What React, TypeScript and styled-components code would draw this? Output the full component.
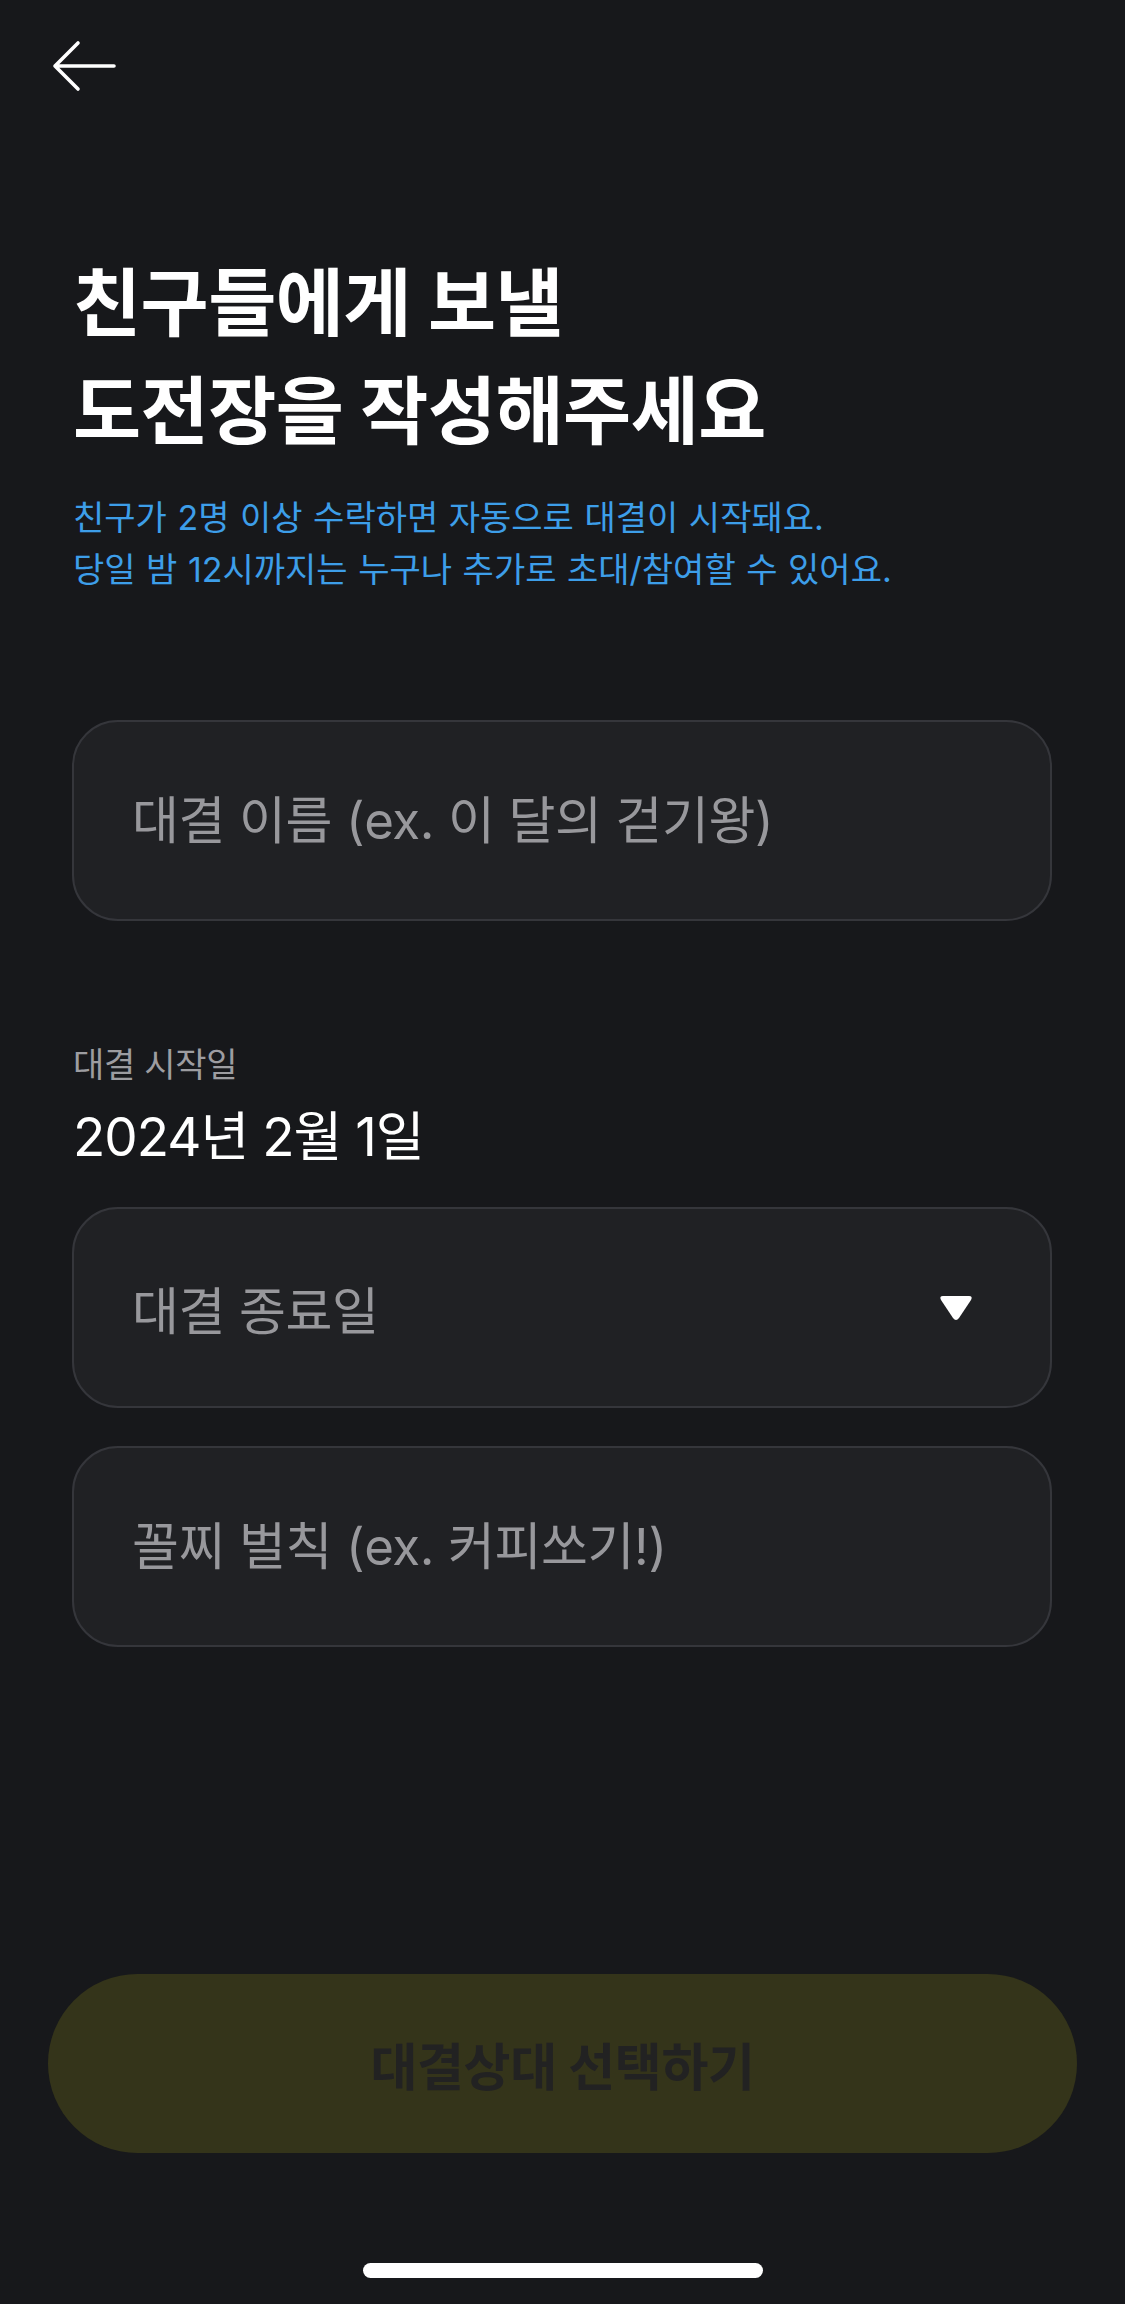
import React from "react";
import styled, { createGlobalStyle } from "styled-components";

const GlobalStyle = createGlobalStyle`
  html, body {
    margin: 0;
    padding: 0;
    background: #17181b;
  }
  * { box-sizing: border-box; }
  body {
    font-family: "Inter", "Noto Sans CJK KR", sans-serif;
  }
`;

const Page = styled.div`
  width: 1125px;
  min-height: 2304px;
  background: #17181b;
  display: flex;
  flex-direction: column;
  font-family: "Inter", "Noto Sans CJK KR", sans-serif;
`;

const Header = styled.header`
  height: 132px;
  display: flex;
  align-items: center;
  padding-left: 52px;
`;

const BackButton = styled.button`
  background: none;
  border: none;
  padding: 0;
  display: flex;
  cursor: pointer;
`;

const Content = styled.main`
  padding: 0 73px 0 72px;
  display: flex;
  flex-direction: column;
`;

const Title = styled.h1`
  margin: 117px 0 0 1px;
  color: #ffffff;
  font-family: "Inter", "Noto Sans CJK KR", sans-serif;
  font-size: 74px;
  line-height: 108px;
  font-weight: 700;
  letter-spacing: -0.5px;
`;

const Subtitle = styled.p`
  margin: 27px 0 0 1px;
  color: #3d9ee9;
  font-size: 34px;
  line-height: 52px;
  font-weight: 400;
  letter-spacing: 0px;
  word-spacing: 1px;
`;

const Field = styled.div<{ $mt: number }>`
  margin-top: ${(p) => p.$mt}px;
  height: 201px;
  border: 2px solid #35363b;
  border-radius: 46px;
  background: #202124;
  display: flex;
  align-items: center;
  padding: 0 76px 0 58px;
`;

const TextInput = styled.input`
  flex: 1;
  background: transparent;
  border: none;
  outline: none;
  color: #ffffff;
  font-family: "Inter", "Noto Sans CJK KR", sans-serif;
  font-size: 51px;
  letter-spacing: -0.4px;
  padding: 0;
  &::placeholder {
    color: #98989c;
  }
`;

const SelectText = styled.span`
  flex: 1;
  color: #98989c;
  font-size: 51px;
  letter-spacing: -0.4px;
`;

const StartBlock = styled.div`
  margin-top: 124px;
  margin-left: 1px;
  display: flex;
  flex-direction: column;
`;

const Label = styled.span`
  color: #9d9da1;
  font-size: 34px;
  line-height: 40px;
  letter-spacing: -0.3px;
`;

const DateText = styled.span`
  margin-top: 22px;
  color: #ffffff;
  font-size: 53px;
  line-height: 60px;
  letter-spacing: -1px;
`;

const Footer = styled.footer`
  margin-top: auto;
  display: flex;
  flex-direction: column;
  align-items: center;
  padding: 0 48px 26px 48px;
`;

const PrimaryButton = styled.button`
  width: 100%;
  height: 179px;
  border: none;
  border-radius: 90px;
  background: #34341a;
  color: #222222;
  font-family: "Inter", "Noto Sans CJK KR", sans-serif;
  font-size: 51px;
  font-weight: 700;
  letter-spacing: -0.4px;
  cursor: default;
`;

const HomeIndicator = styled.div`
  margin-top: 110px;
  width: 400px;
  height: 15px;
  border-radius: 8px;
  background: #ffffff;
`;

const BackIcon = () => (
  <svg width="66" height="52" viewBox="0 0 66 52" fill="none">
    <path
      d="M3 26 H62 M26 3 L3 26 L26 49"
      stroke="#ffffff"
      strokeWidth="3.6"
      strokeLinecap="round"
      strokeLinejoin="round"
    />
  </svg>
);

const CaretDown = () => (
  <svg width="36" height="28" viewBox="0 0 36 28">
    <path
      d="M5 2 H31 Q35 2 33 6 L21 24 Q18 28 15 24 L3 6 Q1 2 5 2 Z"
      fill="#ffffff"
    />
  </svg>
);

export default function App() {
  return (
    <>
      <GlobalStyle />
      <Page>
        <Header>
          <BackButton aria-label="뒤로">
            <BackIcon />
          </BackButton>
        </Header>
        <Content>
          <Title>
            친구들에게 보낼
            <br />
            도전장을 작성해주세요
          </Title>
          <Subtitle>
            친구가 2명 이상 수락하면 자동으로 대결이 시작돼요.
            <br />
            당일 밤 12시까지는 누구나 추가로 초대/참여할 수 있어요.
          </Subtitle>
          <Field $mt={124}>
            <TextInput placeholder="대결 이름 (ex. 이 달의 걷기왕)" />
          </Field>
          <StartBlock>
            <Label>대결 시작일</Label>
            <DateText>2024년 2월 1일</DateText>
          </StartBlock>
          <Field $mt={40}>
            <SelectText>대결 종료일</SelectText>
            <CaretDown />
          </Field>
          <Field $mt={38}>
            <TextInput placeholder="꼴찌 벌칙 (ex. 커피쏘기!)" />
          </Field>
        </Content>
        <Footer>
          <PrimaryButton>대결상대 선택하기</PrimaryButton>
          <HomeIndicator />
        </Footer>
      </Page>
    </>
  );
}
